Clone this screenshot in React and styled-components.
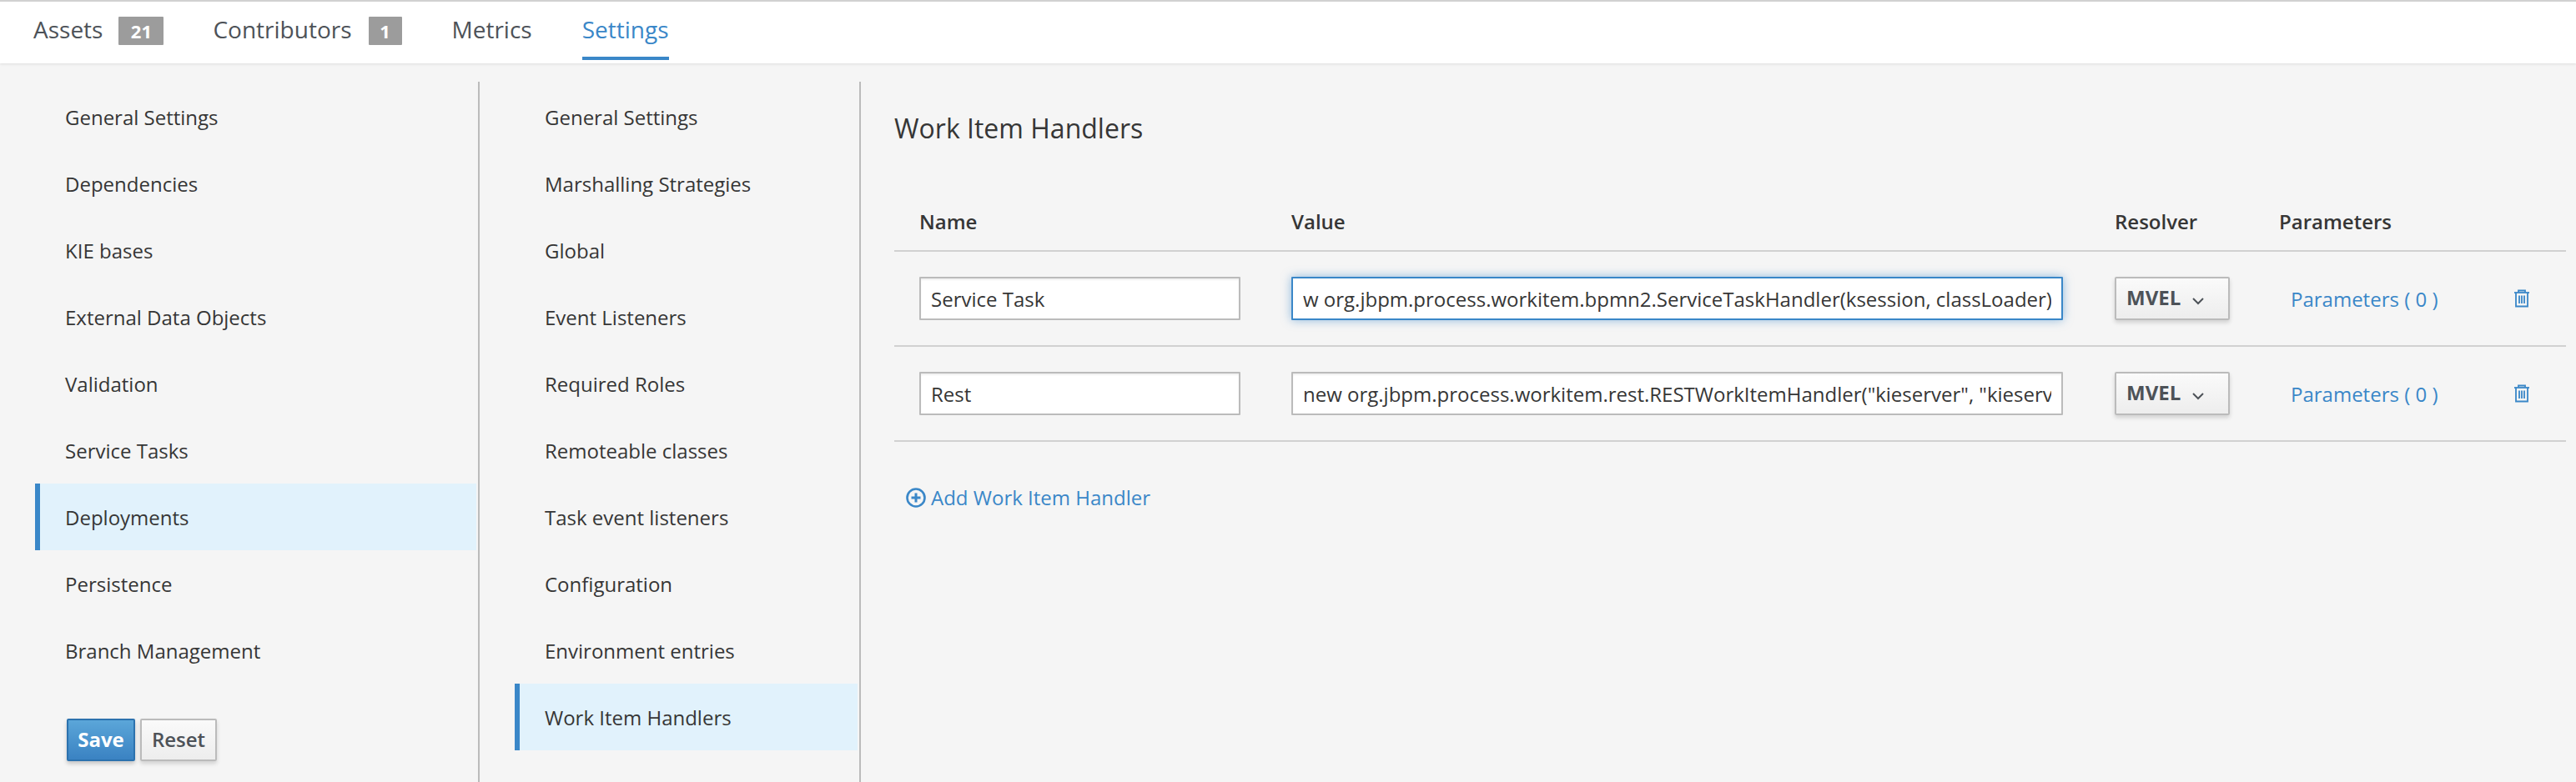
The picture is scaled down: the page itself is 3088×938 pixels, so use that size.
import React from 'react';
import styled, { createGlobalStyle } from 'styled-components';

const GlobalStyle = createGlobalStyle`
    html, body {
        margin: 0;
        padding: 0;
        background: #f5f5f5;
        overflow: hidden;
    }
    body {
        font-family: "Open Sans", "Liberation Sans", sans-serif;
        color: #363636;
    }
`;

const Page = styled.div`
    display: flex;
    flex-direction: column;
    width: 3088px;
    height: 938px;
`;

const TabBar = styled.nav`
    display: flex;
    height: 74px;
    padding-left: 40px;
    background: #fff;
    border-top: 2px solid #d1d1d1;
    box-shadow: 0 1px 3px rgba(0, 0, 0, 0.1);
    position: relative;
`;

const Tab = styled.div`
    display: flex;
    align-items: center;
    height: 66px;
    margin-right: ${props => props.$gap}px;
    font-size: 28px;
    color: ${props => props.$active ? '#3a87c8' : '#4d5258'};
    border-bottom: 4px solid ${props => props.$active ? '#3a87c8' : 'transparent'};
`;

const Badge = styled.span`
    display: flex;
    align-items: center;
    justify-content: center;
    width: ${props => props.$width}px;
    height: 34px;
    margin: 4px 0 0 ${props => props.$left}px;
    background: #9c9c9c;
    border-radius: 1px;
    color: #fff;
    font-size: 22px;
    font-weight: 700;
`;

const Body = styled.div`
    flex: 1;
    display: flex;
    padding-top: 22px;
`;

const SideColumn = styled.div`
    display: flex;
    flex-direction: column;
    width: ${props => props.$width}px;
    padding: 2px 2px 0 42px;
    box-sizing: border-box;
    border-right: 2px solid #bbb;
`;

const SideItem = styled.div`
    display: flex;
    align-items: center;
    height: 80px;
    padding-left: ${props => props.$active ? 30 : 36}px;
    font-size: 24px;
    color: #363636;
    background: ${props => props.$active ? '#e1f2fc' : 'transparent'};
    border-left: ${props => props.$active ? '6px solid #3a87c8' : 'none'};
`;

const ButtonRow = styled.div`
    display: flex;
    gap: 6px;
    margin: 42px 0 0 38px;
`;

const SaveButton = styled.button`
    width: 82px;
    height: 51px;
    padding: 0 0 2px;
    font: 700 24px "Open Sans", sans-serif;
    color: #fff;
    background: linear-gradient(#5ba6d9, #3a82c2);
    border: 2px solid #2c72ae;
    border-radius: 2px;
    box-shadow: 0 3px 5px rgba(0, 0, 0, 0.2);
`;

const ResetButton = styled.button`
    width: 92px;
    height: 51px;
    padding: 0 0 2px;
    font: 600 24px "Open Sans", sans-serif;
    color: #4d5258;
    background: linear-gradient(#fafafa, #ededed);
    border: 2px solid #bbb;
    border-radius: 2px;
    box-shadow: 0 3px 5px rgba(0, 0, 0, 0.15);
`;

const Content = styled.main`
    flex: 1;
    padding: 0 12px 0 40px;
`;

const Title = styled.h2`
    margin: 0;
    padding-top: 33px;
    height: 75px;
    box-sizing: content-box;
    font-size: 32px;
    font-weight: 400;
    line-height: 46px;
    color: #363636;
`;

const HeaderRow = styled.div`
    display: grid;
    grid-template-columns: 30px 446px 987px 197px 1fr;
    align-items: end;
    height: 96px;
    padding-bottom: 18px;
    font-size: 24px;
    line-height: 33px;
    font-weight: 600;
    color: #363636;
    border-bottom: 2px solid #d1d1d1;
    box-sizing: border-box;
`;

const Row = styled.div`
    display: grid;
    grid-template-columns: 30px 446px 987px 197px 212px 1fr;
    align-items: center;
    height: 114px;
    box-sizing: border-box;
    border-bottom: 2px solid #d1d1d1;
`;

const TextInput = styled.input`
    display: block;
    width: ${props => props.$width}px;
    height: 52px;
    padding: 0 12px;
    box-sizing: border-box;
    font: 400 24px "Open Sans", sans-serif;
    color: #363636;
    background: #fff;
    outline: none;
    border: 2px solid ${props => props.$focused ? '#3a87c8' : '#bbb'};
    border-radius: 1px;
    box-shadow: ${props => props.$focused ? '0 0 12px rgba(58, 135, 200, 0.55)' : 'inset 0 2px 2px rgba(0, 0, 0, 0.06)'};
`;

const ResolverButton = styled.button`
    display: flex;
    align-items: center;
    gap: 14px;
    width: 138px;
    height: 52px;
    padding: 0 0 3px 12px;
    box-sizing: border-box;
    font: 700 24px "Open Sans", sans-serif;
    color: #4d5258;
    background: linear-gradient(#fafafa, #ededed);
    border: 2px solid #bbb;
    border-radius: 2px;
    box-shadow: 0 3px 5px rgba(0, 0, 0, 0.15);
`;

const ChevronSvg = styled.svg`
    margin-top: 8px;
`;

const LinkText = styled.a`
    font-size: 24px;
    color: #3a87c8;
    padding-left: 14px;
    white-space: nowrap;
`;

const TrashButton = styled.span`
    display: flex;
    padding-left: 69px;
`;

const AddLink = styled.a`
    display: flex;
    align-items: center;
    gap: 6px;
    margin: 50px 0 0 14px;
    font-size: 24px;
    color: #3a87c8;
`;

function TrashIcon() {
    return (
        <svg width="20" height="22" viewBox="0 0 20 22" fill="none" stroke="#3a87c8" strokeWidth="1.8">
            <path d="M6 3.5V1.5H14V3.5" />
            <path d="M1 4H19" />
            <path d="M3 4V20.5H17V4" />
            <path d="M7 7.5V17M10 7.5V17M13 7.5V17" />
        </svg>
    );
}

function AddIcon() {
    return (
        <svg width="24" height="24" viewBox="0 0 24 24" fill="none" stroke="#3a87c8">
            <circle cx="12" cy="12" r="10.5" strokeWidth="2.6" />
            <path d="M12 6.5V17.5M6.5 12H17.5" strokeWidth="3" />
        </svg>
    );
}

function Chevron() {
    return (
        <ChevronSvg width="14" height="10" viewBox="0 0 14 10" fill="none" stroke="#4d5258" strokeWidth="2">
            <path d="M1 2L7 8L13 2" />
        </ChevronSvg>
    );
}

const projectItems = ['General Settings', 'Dependencies', 'KIE bases', 'External Data Objects', 'Validation', 'Service Tasks', 'Deployments', 'Persistence', 'Branch Management'];
const deploymentItems = ['General Settings', 'Marshalling Strategies', 'Global', 'Event Listeners', 'Required Roles', 'Remoteable classes', 'Task event listeners', 'Configuration', 'Environment entries', 'Work Item Handlers'];

const handlers = [
    { name: 'Service Task', value: 'w org.jbpm.process.workitem.bpmn2.ServiceTaskHandler(ksession, classLoader)', focused: true },
    { name: 'Rest', value: 'new org.jbpm.process.workitem.rest.RESTWorkItemHandler("kieserver", "kieserver", classLoader)', focused: false },
];

export default function App() {
    return (
        <Page>
            <GlobalStyle />
            <TabBar>
                <Tab $gap={59}>Assets<Badge $left={19} $width={54}>21</Badge></Tab>
                <Tab $gap={60}>Contributors<Badge $left={20} $width={40}>1</Badge></Tab>
                <Tab $gap={60}>Metrics</Tab>
                <Tab $active>Settings</Tab>
            </TabBar>
            <Body>
                <SideColumn $width={575}>
                    {projectItems.map(item => (
                        <SideItem key={item} $active={item === 'Deployments'}>{item}</SideItem>
                    ))}
                    <ButtonRow>
                        <SaveButton>Save</SaveButton>
                        <ResetButton>Reset</ResetButton>
                    </ButtonRow>
                </SideColumn>
                <SideColumn $width={457}>
                    {deploymentItems.map(item => (
                        <SideItem key={item} $active={item === 'Work Item Handlers'}>{item}</SideItem>
                    ))}
                </SideColumn>
                <Content>
                    <Title>Work Item Handlers</Title>
                    <HeaderRow>
                        <span />
                        <span>Name</span>
                        <span>Value</span>
                        <span>Resolver</span>
                        <span>Parameters</span>
                    </HeaderRow>
                    {handlers.map(handler => (
                        <Row key={handler.name}>
                            <span />
                            <TextInput $width={385} defaultValue={handler.name} />
                            <TextInput $width={925} $focused={handler.focused} defaultValue={handler.value} />
                            <ResolverButton>MVEL <Chevron /></ResolverButton>
                            <LinkText>Parameters ( 0 )</LinkText>
                            <TrashButton><TrashIcon /></TrashButton>
                        </Row>
                    ))}
                    <AddLink><AddIcon />Add Work Item Handler</AddLink>
                </Content>
            </Body>
        </Page>
    );
}
